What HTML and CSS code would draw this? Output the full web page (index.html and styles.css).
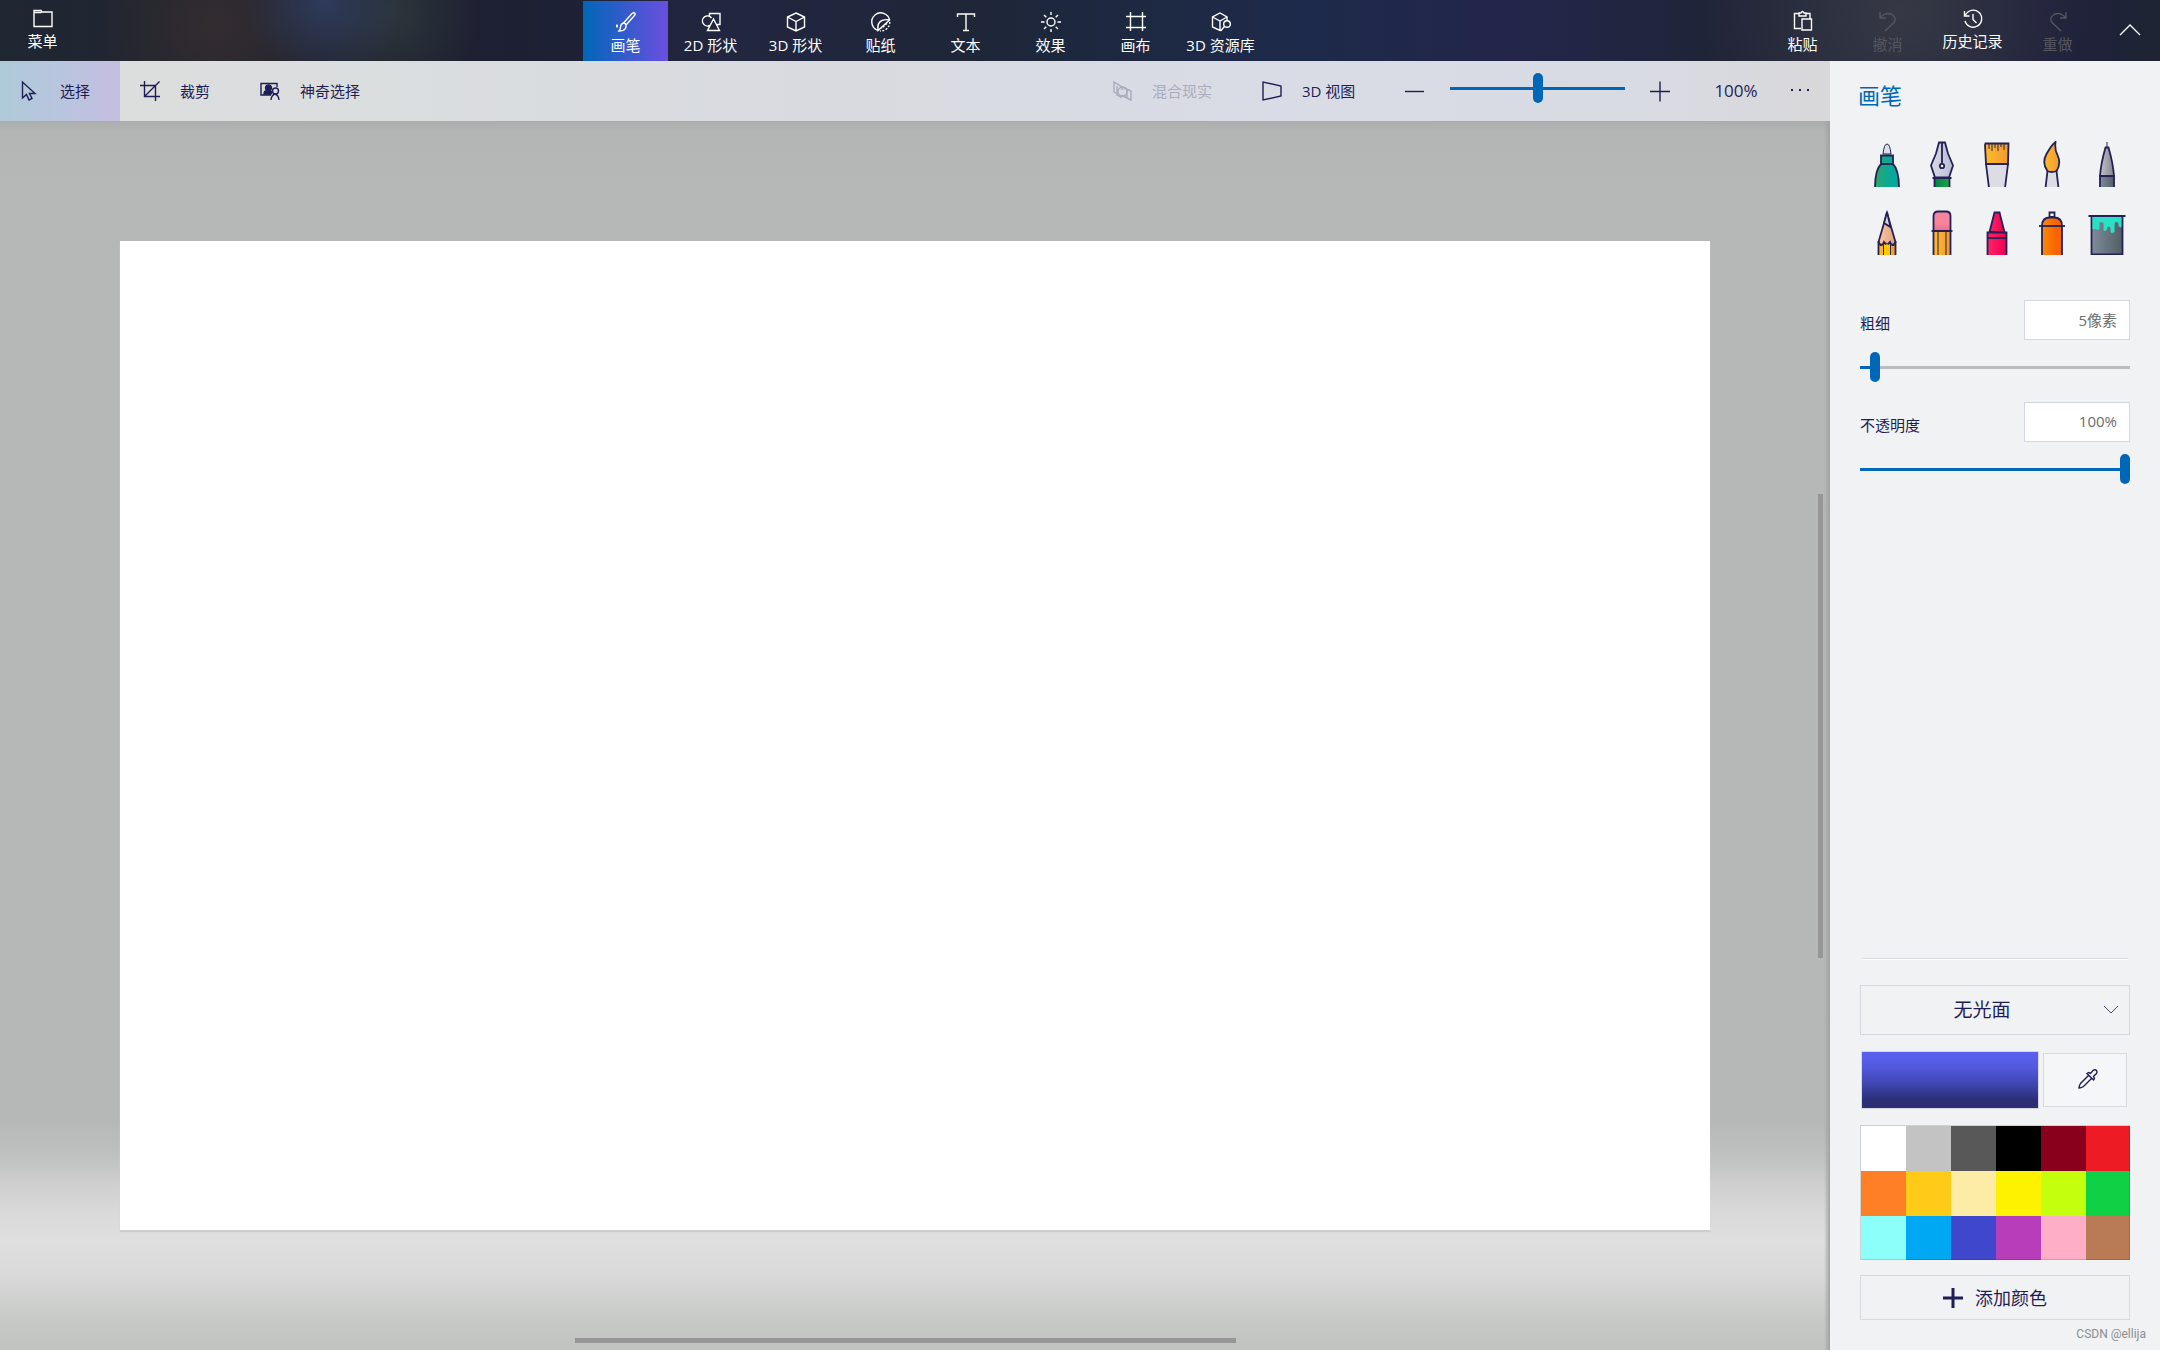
FILE: index.html
```html
<!DOCTYPE html>
<html lang="zh-CN">
<head>
<meta charset="utf-8">
<title>画图 3D</title>
<link rel="stylesheet" href="styles.css">
</head>
<body>
<div class="app">
  <header class="ribbon">
    <div class="ribbon-side">
      <button class="tab high" type="button"><svg class="icon" viewBox="0 0 20 20"><path d="M1 17.500V1.500h7l1 1.500h10v14.500zM1 3.500h7l1-1"/></svg>菜单</button>
    </div>
    <nav class="tabs">
      <button class="tab active" type="button"><svg class="icon" viewBox="0 0 20 20"><path d="M7.500 11 16 1.500q2-1.500 3 0 .5 1-.5 2L10 13M7.500 11q2 .2 2.500 2 .8 6-7 6 1.600-1.800 1.500-4 .5-3.500 3-4zM1 12.500v3M0 14h2"/></svg>画笔</button>
      <button class="tab" type="button"><svg class="icon" viewBox="0 0 20 20"><path d="M8.500 4.500V1.500H19v11h-3M10.500 6a5 5 0 1 0-2 7.500M12.500 7 6.500 18.500h12z"/></svg>2D 形状</button>
      <button class="tab" type="button"><svg class="icon" viewBox="0 0 20 20"><path d="m10 1 8.500 4v10L10 19l-8.500-4V5zM1.500 5l8.500 4.500L18.500 5M10 9.500V19"/></svg>3D 形状</button>
      <button class="tab" type="button"><svg class="icon" viewBox="0 0 20 20"><path d="M6.500 18.200A9 9 0 1 1 18.600 8L7 18.500q-1-8 4-10 4-1.500 7.600-.5"/><path stroke-dasharray="2 1.500" d="M18.800 10A9 9 0 0 1 9 19M16 11.500l-5.500 5"/></svg>贴纸</button>
      <button class="tab" type="button"><svg class="icon" viewBox="0 0 20 20"><path d="M1.500 5V2h17v3M10 2v16.500M7 18.500h6"/></svg>文本</button>
      <button class="tab" type="button"><svg class="icon" viewBox="0 0 20 20"><circle cx="10" cy="10" r="4"/><path d="M10 0v3M10 17v3M0 10h3.500M16.500 10H20M3 3l2.300 2.300M14.700 14.700 17 17M3 17l2.300-2.300M14.700 5.300 17 3"/></svg>效果</button>
      <button class="tab" type="button"><svg class="icon" viewBox="0 0 20 20"><path d="M4.500 0v19M16.500 0v19M0 4.500h20M0 15.500h20"/></svg>画布</button>
      <button class="tab" type="button"><svg class="icon" viewBox="0 0 20 20"><path d="M10 18l-1 .5L1.500 15V5L9 1l7 4v3M1.500 5 9 9l7-4M9 9v9.500"/><circle cx="16" cy="12" r="3.300"/><path d="m13.500 14.500-4 4.500"/></svg>3D 资源库</button>
    </nav>
    <div class="ribbon-side">
      <button class="tab" type="button"><svg class="icon" viewBox="0 0 20 20"><path d="M8 17.500H1.500v-15H6M13 2.500h4v5M6 5V2h2q1.500-3 3 0h2v3zM9 8h9.500v11H9z"/></svg>粘贴</button>
      <button class="tab" type="button" disabled><svg class="icon" viewBox="0 0 20 20"><path d="M2 1v6h6M2 7q6-6.500 12-3.500 5.500 4 1.500 8.500L7 20"/></svg>撤消</button>
      <button class="tab high" type="button"><svg class="icon" viewBox="0 0 20 20"><path d="M2.500 6A8.500 8.500 0 1 1 2 12M1.500 2v5h5M10 5v5.500l3.500 3.500"/></svg>历史记录</button>
      <button class="tab" type="button" disabled><svg class="icon" viewBox="0 0 20 20"><path d="M18 1v6h-6M18 7q-6-6.500-12-3.500-5.500 4-1.500 8.500l8.500 8"/></svg>重做</button>
      <button class="collapse" type="button" aria-label="折叠"><svg class="icon" viewBox="0 0 20 20"><path d="m0 16 10-10 10 10"/></svg></button>
    </div>
  </header>

  <div class="body">
    <main class="main">
      <div class="toolbar">
        <button class="tool selected" type="button"><svg class="icon" viewBox="0 0 20 20"><path d="M2.500 1v16l4-3.500L9 19l3-1.500-2.500-5H15z"/></svg>选择</button>
        <button class="tool" type="button"><svg class="icon" viewBox="0 0 20 20"><path d="M4.500 0v15.500H20M0 4.500h15.500V20M4.500 15.500 19.500.5"/></svg>裁剪</button>
        <button class="tool magic" type="button"><svg class="icon" viewBox="0 0 20 20"><path d="M11 14H1V2.500h16V6"/><path class="solid" d="M4 13q0-3 3-3.500a3 3 0 1 1 3 0l2 1.500-1 2z"/><circle cx="15.500" cy="10" r="3"/><path d="M11 19q.5-5 4-6 3.500 1 4 6"/></svg>神奇选择</button>
        <div class="view">
          <button class="tool mixed" type="button" disabled><svg class="icon" viewBox="0 0 20 20"><path d="M5 13 2 11V1l8 5v3M5 5v9l5 2.500M10 6l9 4v9l-9-4.500M15 8.500V17"/><circle cx="10.500" cy="10.500" r="4.500"/></svg>混合现实</button>
          <button class="tool three" type="button"><svg class="icon" viewBox="0 0 20 20"><path d="M1 1v18l18-4V5z"/></svg>3D 视图</button>
          <button class="step" type="button" aria-label="缩小"><svg class="icon" viewBox="0 0 20 20"><path d="M0 10.500h19"/></svg></button>
          <input class="range zoom" type="range" min="0" max="100" value="50" aria-label="缩放">
          <button class="step" type="button" aria-label="放大"><svg class="icon" viewBox="0 0 20 20"><path d="M0 10.500h20M10 .5v20"/></svg></button>
          <button class="percent" type="button">100%</button>
          <button class="more" type="button" aria-label="更多"><svg class="icon" viewBox="0 0 20 20"><path class="solid dots" d="M1 10h2v2H1zM9 10h2v2H9zM17 10h2v2h-2z"/></svg></button>
        </div>
      </div>
      <section class="workspace">
        <div class="canvas"></div>
        <div class="scroll-y"></div>
        <div class="scroll-x"></div>
      </section>
    </main>

    <aside class="panel">
      <h1 class="title">画笔</h1>
      <svg class="defs" width="0" height="0" aria-hidden="true">
        <defs>
          <linearGradient id="green"><stop offset="0" stop-color="#2fa866"/><stop offset=".6" stop-color="#0aa89b"/></linearGradient>
          <linearGradient id="grass"><stop offset="0" stop-color="#008542"/><stop offset="1" stop-color="#22a34a"/></linearGradient>
          <linearGradient id="silver"><stop offset="0" stop-color="#dadbe5"/><stop offset="1" stop-color="#b9bbd2"/></linearGradient>
          <linearGradient id="amber"><stop offset="0" stop-color="#ffba2c"/><stop offset="1" stop-color="#f29b2e"/></linearGradient>
          <linearGradient id="steel"><stop offset="0" stop-color="#7e8c9a"/><stop offset="1" stop-color="#525d66"/></linearGradient>
          <linearGradient id="lead"><stop offset="0" stop-color="#c4c3cb"/><stop offset="1" stop-color="#83838f"/></linearGradient>
          <linearGradient id="skin"><stop offset="0" stop-color="#ffc9a8"/><stop offset="1" stop-color="#d9a07a"/></linearGradient>
          <linearGradient id="rose" x2="0" y2="1"><stop offset="0" stop-color="#f4849d"/><stop offset=".6" stop-color="#f9839c"/><stop offset="1" stop-color="#e27288"/></linearGradient>
          <linearGradient id="red"><stop offset="0" stop-color="#ff2469"/><stop offset="1" stop-color="#ee0050"/></linearGradient>
          <linearGradient id="orange"><stop offset="0" stop-color="#f98a08"/><stop offset=".7" stop-color="#f96400"/></linearGradient>
        </defs>
      </svg>
      <div class="brushes">
        <button class="brush" type="button" aria-label="马克笔"><svg viewBox="0 0 40 46"><path class="thin" fill="#dcdde4" d="M16 13q1-10 4-10t4 10z"/><path fill="url(#green)" d="M14 14.500h12V23q6 6 6 24H8Q8 29 14 23z"/><path d="M14 23h12"/></svg></button>
        <button class="brush" type="button" aria-label="书法笔"><svg viewBox="0 0 40 46"><path fill="url(#silver)" d="M17 1.500h6l3 11 5 12-4 12H13l-4-12 5-12z"/><path fill="url(#grass)" d="M12.500 37h15v10h-15z"/><path d="M20 1.500V23M10.500 37h19"/><circle cx="20" cy="25" r="2.200" fill="#eee"/></svg></button>
        <button class="brush" type="button" aria-label="油画笔"><svg viewBox="0 0 40 46"><path fill="#dcdce5" d="M9 23h22l-3 24H12z"/><path fill="url(#amber)" d="M8.500 2.500h23L31 23H9L8 4z"/><path class="thin" d="M12 2v6M15 2v8M18 2v5M21 2v8M24 2v4M27 2v7"/></svg></button>
        <button class="brush" type="button" aria-label="水彩笔"><svg viewBox="0 0 40 46"><path fill="#dcdce5" d="M15.500 30h9l2 17h-13z"/><path fill="url(#amber)" d="M23.500 1q-1 8 2 13 4 9-1 16-5 2-9 0-6-8-1-17 5-9 9-12z"/></svg></button>
        <button class="brush" type="button" aria-label="像素笔"><svg viewBox="0 0 40 46"><path fill="url(#steel)" d="M13 35h14v12H13z"/><path fill="url(#lead)" d="M18.500 6.500h3Q26 22 27 35H13q1-13 5.500-28.500z"/><path class="thin" d="M20 1v5"/></svg></button>
        <button class="brush" type="button" aria-label="铅笔"><svg viewBox="0 0 40 46"><path fill="url(#amber)" d="M12 33v13h16V33z" stroke="none"/><path fill="url(#skin)" d="m20 4 8.500 29-2 3q-3 0-3.500-3l-3 3-3-3q-.5 3-3.500 3l-2-3z"/><path fill="#cfd6dd" d="m20 3 3.500 15-6.500-4z"/><path fill="#ffc800" stroke="none" d="M17 37l3-2 3 2v9h-6z"/><path d="M11.500 32v14M28.500 32v14"/><path class="thin" d="M16.500 36v10M23.500 36v10"/></svg></button>
        <button class="brush" type="button" aria-label="橡皮擦"><svg viewBox="0 0 40 46"><path fill="url(#amber)" d="M11.500 22h17v25h-17z"/><path fill="url(#rose)" d="M11.500 22V7q0-4.500 4.500-4.500h8q4.500 0 4.500 4.500v15z"/><path d="M9.500 22h21"/><path class="thin" d="M16 22v24M24 22v24"/></svg></button>
        <button class="brush" type="button" aria-label="蜡笔"><svg viewBox="0 0 40 46"><path fill="url(#red)" d="M10.500 23.500h19V47h-19z"/><path fill="url(#red)" d="m12.500 23 5-19.500h5l5 19.500z"/><path d="M10.500 29h19"/></svg></button>
        <button class="brush" type="button" aria-label="喷雾罐"><svg viewBox="0 0 40 46"><path fill="#fff" d="M17.500 3.500h5V8h-5z"/><path fill="url(#orange)" d="M10 17q0-8.500 8-8.500h4q8 0 8 8.500v30H10z"/><path d="M7 17h26"/></svg></button>
        <button class="brush" type="button" aria-label="填充"><svg viewBox="0 0 40 46"><path fill="url(#steel)" d="M4.500 7h31v38.500h-31z"/><path fill="#28e2c5" stroke="none" d="M5.500 8h29v10q-3 1-3-3 0-2-2-2t-2 3v7q-3 2-4 0v-4q-1-2-3-1-1 6-4 3v-7q-3-2-4 0v6q-2 2-3 0H5.500z"/><path d="M1.500 7h37"/></svg></button>
      </div>

      <div class="field first">
        <div class="field-row"><label for="size">粗细</label><input class="value" id="size" type="text" value="5像素"></div>
        <input class="range size" type="range" min="0" max="100" value="4" aria-label="粗细">
      </div>
      <div class="field">
        <div class="field-row"><label for="opacity">不透明度</label><input class="value" id="opacity" type="text" value="100%"></div>
        <input class="range" type="range" min="0" max="100" value="100" aria-label="不透明度">
      </div>

      <div class="colours">
        <hr class="rule">
        <div class="select-wrap">
          <select class="material" aria-label="材质"><option>无光面</option></select>
          <svg class="chevron" viewBox="0 0 16 10"><path d="m1 1 7 7 7-7"/></svg>
        </div>
        <div class="current">
          <button class="swatch-now" type="button" aria-label="当前颜色"></button>
          <button class="picker" type="button" aria-label="取色器"><svg class="icon" viewBox="0 0 20 20"><path d="m11 6-8.500 8.500Q1 17 1 19q2 0 4.500-1.500L14 9M9 4.500l1.500-1 2 1L15 1.500q2-1.500 3.500 0 1 1.500 0 3l-3 3 1 2-1 1.500z"/></svg></button>
        </div>
        <div class="palette">
          <button class="chip white" type="button" aria-label="白色"></button><button class="chip silver" type="button" aria-label="浅灰"></button><button class="chip grey" type="button" aria-label="深灰"></button><button class="chip black" type="button" aria-label="黑色"></button><button class="chip maroon" type="button" aria-label="深红"></button><button class="chip red" type="button" aria-label="红色"></button>
          <button class="chip orange" type="button" aria-label="橙色"></button><button class="chip gold" type="button" aria-label="金色"></button><button class="chip cream" type="button" aria-label="浅黄"></button><button class="chip yellow" type="button" aria-label="黄色"></button><button class="chip lime" type="button" aria-label="酸橙"></button><button class="chip green" type="button" aria-label="绿色"></button>
          <button class="chip aqua" type="button" aria-label="浅青"></button><button class="chip sky" type="button" aria-label="天蓝"></button><button class="chip indigo" type="button" aria-label="靛蓝"></button><button class="chip purple" type="button" aria-label="紫色"></button><button class="chip pink" type="button" aria-label="粉色"></button><button class="chip brown" type="button" aria-label="棕色"></button>
        </div>
        <button class="add" type="button"><svg class="icon bold" viewBox="0 0 20 20"><path d="M0 10h20M10 0v20"/></svg>添加颜色</button>
        <div class="credit">CSDN @ellija</div>
      </div>
    </aside>
  </div>
</div>
</body>
</html>
```
FILE: styles.css
```css
* { box-sizing: border-box; }

body {
  margin: 0;
  font: 15px/20px "Open Sans", "Noto Sans CJK SC", sans-serif;
  color: #1f1d55;
}

button, input, select { font: inherit; color: inherit; margin: 0; }
button { border: 0; padding: 0; background: none; white-space: nowrap; }

.app { display: flex; flex-direction: column; min-height: 100vh; }

.icon {
  width: 20px;
  height: 20px;
  flex: none;
  fill: none;
  stroke: currentColor;
  stroke-width: 1.4;
  overflow: visible;
}
.icon .solid { fill: currentColor; }
.icon .dots { stroke: none; }
.icon.bold { stroke-width: 3; }

/* Ribbon */
.ribbon {
  display: grid;
  grid-template-columns: auto 1fr auto;
  height: 61px;
  color: #fff;
  background:
    radial-gradient(circle at 15% 0, #2e3b5c, transparent 80px),
    radial-gradient(circle at 10% 40%, #332c2f, transparent 120px),
    radial-gradient(circle at 18% 20%, #2c363c, transparent 90px),
    radial-gradient(circle at 88% 20%, #363944, transparent 200px),
    linear-gradient(90deg, #1f2733, #22232e 15%, #1d2033 24%, #222640 34%, #1e2638 45%, #1d2a4a 60%, #23264a 70%, #202437 80%, #1e1f3c 95%, #1f2433);
}
.ribbon-side { display: flex; }
.tabs { display: flex; justify-content: center; padding: 1px 0 0 1px; }
.tab {
  display: flex;
  flex-direction: column;
  align-items: center;
  gap: 3px;
  width: 85px;
  padding-top: 11px;
}
.tab.high { padding-top: 9px; gap: 2px; }
.tab.active { background: linear-gradient(90deg, #0067b8, #6a4fe0); }
.tab:disabled { color: #54565f; }
.collapse { width: 60px; }

.body { flex: 1; display: flex; }
.main { flex: 1; display: flex; flex-direction: column; }

/* Toolbar */
.toolbar {
  display: flex;
  height: 60px;
  background: linear-gradient(90deg, #dddddd, #dadddf 25%, #d8dadf 45%, #d9dce6 70%, #d9dbe3 90%, #d8d8da);
}
.tool {
  display: flex;
  align-items: center;
  gap: 20px;
  width: 120px;
  padding-left: 20px;
}
.tool.selected { background: linear-gradient(90deg, #aecad8, #b9c5df 50%, #c5bee1); }
.tool.magic { width: 140px; }
.tool:disabled { color: #a9abbd; }
.view { display: flex; margin-left: auto; }
.mixed, .three { width: 150px; padding-left: 0; }
.three { width: 143px; }
.step { width: 20px; padding-top: 4px; }
.percent { width: 80px; margin-left: 20px; padding-left: 12px; border: solid #d5d8df; border-width: 0 1px; font-size: 17px; }
.more { width: 60px; }

/* Workspace */
.workspace {
  flex: 1;
  display: grid;
  position: relative;
  padding: 120px;
  background:
    linear-gradient(270deg, #a0a2a1, transparent) right / 6px 100% no-repeat,
    linear-gradient(#abadac, #b3b5b4 10px, #b6b8b7 60px, #b5b8b6 1000px, #bfc1c0 1035px, #cfd0cf 1065px, #d9dad9 1095px, #dedfde 1120px, #d8d9d8 1155px, #c8cac8 1195px, #c0c2c0 1229px);
}
.canvas { background: #fff; box-shadow: 0 2px 1px #cccecc; }
.scroll-x, .scroll-y { position: absolute; background: #959695; }
.scroll-y { right: 7px; top: 373px; width: 5px; height: 464px; }
.scroll-x { left: 575px; bottom: 7px; width: 661px; height: 5px; }

/* Side panel */
.panel {
  display: flex;
  flex-direction: column;
  width: 330px;
  padding: 19px 30px 8px;
  background: #f0f2f4;
}
.defs { position: absolute; }
.title { margin: 0 0 0 -2px; font-size: 22px; line-height: 30px; font-weight: 400; color: #0067b8; }
.brushes {
  display: grid;
  grid-template-columns: repeat(5, 55px);
  row-gap: 22px;
  margin: 31px 0 0 -1px;
}
.brush { height: 46px; }
.brush svg {
  display: block;
  width: 40px;
  height: 46px;
  margin: 0 auto;
  stroke: #232156;
  stroke-width: 1.8;
}
.brush .thin { stroke-width: 1; }

.field { display: flex; flex-direction: column; margin-top: 20px; }
.field.first { margin-top: 45px; }
.field-row { display: flex; justify-content: space-between; align-items: center; }
.field-row label { padding-top: 6px; }
.value {
  width: 106px;
  height: 40px;
  padding: 0 12px 2px;
  border: 1px solid #d4d7e1;
  background: #fff;
  color: #6d6d6d;
  text-align: right;
}
.field .range { margin-top: 12px; }

.range {
  appearance: none;
  width: 100%;
  height: 30px;
  background: linear-gradient(#0067b8, #0067b8) center / 100% 3px no-repeat;
}
.range.size { background-image: linear-gradient(90deg, #0067b8 5%, #babdbd 5%); }
.range.zoom { width: 175px; margin: 12px 25px 0; }
.range::-webkit-slider-thumb {
  appearance: none;
  width: 10px;
  height: 30px;
  border-radius: 5px;
  background: #0067b8;
}

.colours { display: flex; flex-direction: column; margin-top: auto; }
.rule { height: 2px; margin: 0 2px 25px 3px; border: 0; border-top: 1px solid #d7d9dc; background: #fff; }
.select-wrap { display: grid; align-items: center; }
.select-wrap > * { grid-area: 1 / 1; }
.material {
  appearance: none;
  height: 50px;
  padding: 0 26px 0 0;
  border: 1px solid #d4d7e1;
  border-radius: 0;
  background: none;
  font-size: 19px;
  text-align: center;
  text-align-last: center;
}
.chevron { width: 16px; height: 10px; justify-self: end; margin-right: 11px; fill: none; stroke: #4b4974; pointer-events: none; }
.current { display: flex; align-items: center; gap: 4px; margin: 16px 3px 16px 1px; }
.swatch-now { flex: 1; height: 58px; border: 1px solid #d7d9dc; background: linear-gradient(#5a60f0, #535ae0 25%, #4148b4 55%, #2c2f76 85%); }
.picker { width: 84px; height: 54px; border: 1px solid #d7d9dc; background: #f4f6f8; padding: 2px 0 0 6px; }
.palette {
  display: grid;
  grid-template-columns: repeat(6, 45px);
  position: relative;
  height: 135px;
  padding: 1px 0 0 1px;
  overflow: hidden;
}
.palette::after { content: ""; position: absolute; inset: 0; border: 1px solid #00000022; }
.chip { height: 45px; }
.white { background: #fff; }
.silver { background: #c3c3c3; }
.grey { background: #585858; }
.black { background: #000; }
.maroon { background: #88001b; }
.red { background: #ed1c24; }
.orange { background: #ff7f27; }
.gold { background: #ffca18; }
.cream { background: #fdeca6; }
.yellow { background: #fff200; }
.lime { background: #c4ff0e; }
.green { background: #0ed145; }
.aqua { background: #8cfffb; }
.sky { background: #00a8f3; }
.indigo { background: #3f48cc; }
.purple { background: #b83dba; }
.pink { background: #ffaec8; }
.brown { background: #b97a56; }
.add {
  display: flex;
  align-items: center;
  justify-content: center;
  gap: 12px;
  height: 45px;
  margin-top: 15px;
  border: 1px solid #d7d9dc;
  font-size: 18px;
}
.credit { margin: 6px -16px 0 0; font: 12px/16px Roboto, Arial, sans-serif; color: #8b8d8f; text-align: right; }
```
